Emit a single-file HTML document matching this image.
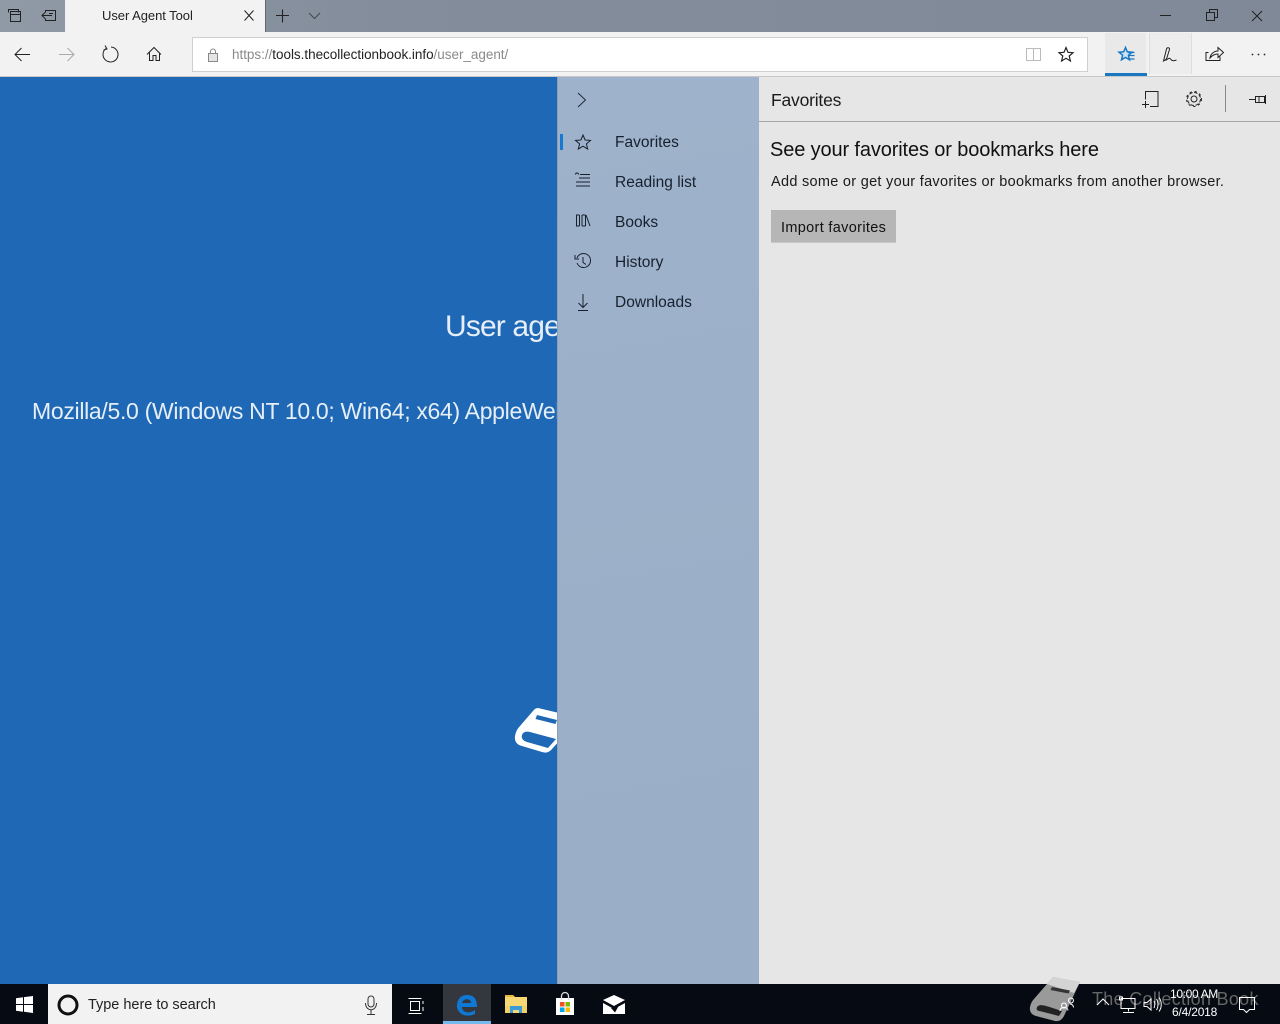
<!DOCTYPE html>
<html><head><meta charset="utf-8"><title>User Agent Tool</title>
<style>
html,body{margin:0;padding:0;width:1280px;height:1024px;overflow:hidden;background:#1f68b5}
body{position:relative;font-family:"Liberation Sans",sans-serif;color:#1a1a1a}
.a{position:absolute}
.t{position:absolute;white-space:nowrap;line-height:1}
.n{font-size:15.5px;color:#17212e;letter-spacing:.02px;left:615px}
svg{position:absolute;overflow:visible;fill:none;stroke:#222;stroke-width:1}
</style></head><body>
<!-- Title bar -->
<div class="a" style="left:0;top:0;width:1280px;height:32px;background:linear-gradient(90deg,#8f9aa6,#838d9b 30%,#7f8997)"></div>
<div class="a" style="left:65px;top:0;width:200px;height:32px;background:#f2f2f2"></div>
<div class="a" style="left:265px;top:0;width:1px;height:32px;background:#5f6872"></div>
<div class="t" style="left:102px;top:9px;font-size:13px;color:#222;letter-spacing:-.05px">User Agent Tool</div>
<svg style="left:0;top:0" width="330" height="32">
<path d="M8.5 12.5v-3h10v3M10.5 11.5h10v10h-10zM10.5 14.5h10"/>
<path d="M45.5 12.5v-2h10v10h-10v-2M42 15.5h10M45 12.500l-3 3 3 3M49 13.500h4"/>
<path d="M244.500 10.500l9 10M253.500 10.500l-9 10"/>
<path d="M282.500 9.500v13M276 15.500h13" stroke-width="1.100"/>
<path d="M309 13l5.500 5.500 5.500-5.500" stroke="#3f4650"/>
</svg>
<svg style="left:1150px;top:0" width="130" height="32">
<path d="M10 15.500h11"/>
<path d="M56.500 12.500h8v8h-8zM59.500 12.500v-3h8v8h-3"/>
<path d="M102 11l10 10M112 11l-10 10"/>
</svg>
<!-- Toolbar -->
<div class="a" style="left:0;top:32px;width:1280px;height:44px;background:#f2f2f2"></div>
<div class="a" style="left:192px;top:37px;width:894px;height:33px;background:#fff;border:1px solid #cfcfcf"></div>
<div class="t" style="left:232px;top:48px;font-size:13.5px;color:#8a8a8a;letter-spacing:-.03px">https://<span style="color:#222">tools.thecollectionbook.info</span>/user_agent/</div>
<svg style="left:0;top:32px" width="220" height="44">
<path d="M15 22.500h15M21.500 16l-6.500 6.500 6.500 6.500"/>
<path d="M59 22.500h15M67.500 16l6.500 6.500-6.500 6.500" stroke="#aaa"/>
<path d="M106 16.500a7.500 7.500 0 1 0 5-1.500M105 13.500l2 3.500-3.500 1"/>
<path d="M147 22.500l7-7 7 7M149.500 20.500v8h3.500v-5h3v5h3.500v-8"/>
</svg>
<svg style="left:205px;top:46px" width="16" height="18">
<rect x="3.500" y="7.500" width="9" height="8" fill="#e4e4e4" stroke="#888"/>
<path d="M5.500 7.500v-2a2.500 2.500 0 0 1 5 0v2" stroke="#888"/>
</svg>
<svg style="left:1020px;top:44px" width="70" height="22">
<path d="M6.500 4.500h6.500l.5 1 .5-1h6.500v12h-14zM13.500 5.500v11" stroke="#bbb"/>
<path d="M46 3.500l2 4.800 5 .4-3.800 3.300 1.200 5-4.400-2.700-4.400 2.700 1.200-5-3.800-3.300 5-.4z" stroke="#222" stroke-width="1.200"/>
</svg>
<!-- right toolbar -->
<div class="a" style="left:1105px;top:33px;width:41px;height:40px;background:#e9e9e9"></div>
<div class="a" style="left:1105px;top:73px;width:42px;height:3px;background:#1a78c2"></div>
<div class="a" style="left:1149px;top:33px;width:41px;height:41px;background:#ededed;border-right:1px solid #dedede;border-left:1px solid #dedede"></div>
<svg style="left:1105px;top:33px" width="175" height="42">
<path d="M20.500 14.500l1.800 4.300 4.700.4-3.600 3 1.100 4.600-4-2.400-4 2.400 1.100-4.600-3.600-3 4.700-.4z" stroke="#1a78c2" stroke-width="1.500" fill="#cfe3f3"/>
<path d="M23 19.500h6.500M24 22.500h5.500M24 26h5.500" stroke="#1a78c2" stroke-width="1.200"/>
<path d="M58.500 28l3-12c.5-2 3.500-1.500 3 .5l-3 9.500-3 2zM60.500 27.500c3-2 4-3.500 5.500-1 1 1.500 3 1.500 5.500.5"/>
<path d="M103.500 19.500h-2.500v8h14v-4M105 25c.5-4 4-7 8-7v-3.500l5.500 5-5.500 5v-3.500c-3 0-5.500 1-8 4z"/>
<circle cx="147.500" cy="21.500" r=".9" fill="#222" stroke="none"/><circle cx="153.500" cy="21.500" r=".9" fill="#222" stroke="none"/><circle cx="159.500" cy="21.500" r=".9" fill="#222" stroke="none"/>
</svg>
<div class="a" style="left:0;top:76px;width:1280px;height:1px;background:#c8c8c8"></div>
<!-- Page -->
<div class="a" style="left:0;top:77px;width:558px;height:907px;background:#1f68b5;overflow:hidden">
<div class="t" style="left:445px;top:235px;font-size:30px;color:#e6eef7;letter-spacing:-.85px">User agent</div>
<div class="t" style="left:32px;top:323px;font-size:23px;color:#e6eef7;letter-spacing:-.31px">Mozilla/5.0 (Windows NT 10.0; Win64; x64) AppleWebKit/537.36</div>
<svg style="left:0;top:0" width="620" height="700">
<path d="M538 631L580 641 552 672q-4 5-10 3L522 669q-8-2-7-10q1-6 5-10L533 634q2-3 5-3z" fill="#fff" stroke="none"/>
<path d="M522 658c1-3 4-4 8-3L556 662 548 671 527 665c-4-1-6-4-5-7z" fill="#1f68b5" stroke="none"/>
<path d="M537 638l20 5-1.500 4-20-5z" fill="#1f68b5" stroke="none"/>
</svg>
</div>
<div class="a" style="left:557px;top:77px;width:1px;height:907px;background:#8aa0bb"></div>
<!-- Side nav -->
<div class="a" style="left:558px;top:77px;width:201px;height:907px;background:linear-gradient(170deg,#9fb2cb,#9bafc8 60%,#9aaec8)"></div>
<div class="a" style="left:560px;top:134px;width:3px;height:16px;background:#1a78d0"></div>
<div class="t n" style="top:135px">Favorites</div>
<div class="t n" style="top:175px">Reading list</div>
<div class="t n" style="top:215px">Books</div>
<div class="t n" style="top:255px">History</div>
<div class="t n" style="top:295px">Downloads</div>
<svg style="left:558px;top:77px" width="60" height="240">
<path d="M20 16l7.500 7-7.500 7" stroke="#1d2a3a"/>
<path d="M25 58l2.100 5 5.400.4-4.100 3.500 1.300 5.200-4.700-2.900-4.700 2.900 1.300-5.200-4.100-3.500 5.400-.4z" stroke="#17212e"/>
<path d="M21 101h11M18 105h14M18 109h14M22 97.500h10M17.500 97.500a1.500 1.500 0 1 1 3 0" stroke="#17212e"/>
<path d="M18.500 138v11M21.500 138v11M24 138v11M27.500 138v11M18 138h3.500M18 149h3.500M24 138h3.500M24 149h3.500M28 138l4 11" stroke="#17212e"/>
<path d="M19 181a7 7 0 1 1 0 5M17 178v4h4M25 180v5.500l3 2" stroke="#17212e"/>
<path d="M25 217v13M20.500 226l4.500 4.500 4.500-4.500M20 233.500h10" stroke="#17212e"/>
</svg>
<!-- Favorites pane -->
<div class="a" style="left:759px;top:77px;width:521px;height:907px;background:#e6e6e6"></div>
<div class="a" style="left:759px;top:121px;width:521px;height:1px;background:#a8a8a8"></div>
<div class="t" style="left:771px;top:92px;font-size:17.5px;color:#1a1a1a;letter-spacing:-.2px">Favorites</div>
<div class="t" style="left:770px;top:140px;font-size:20px;color:#111;letter-spacing:-.13px">See your favorites or bookmarks here</div>
<div class="t" style="left:771px;top:175px;font-size:14.5px;color:#1a1a1a;letter-spacing:.29px">Add some or get your favorites or bookmarks from another browser.</div>
<div class="a" style="left:771px;top:210px;width:125px;height:32px;background:#b6b6b6;border-bottom:1px solid #c8c8c8"></div>
<div class="t" style="left:781px;top:221px;font-size:14.5px;color:#111;letter-spacing:.33px">Import favorites</div>
<svg style="left:1130px;top:82px" width="150" height="34">
<path d="M15.500 17.500v-8h12.500v15h-8M12 22.500h7M15.500 19v7"/>
<g transform="translate(64,17)"><circle r="3" /><circle r="6.500" stroke-dasharray="3.500 1.600"/><circle r="7.500" stroke-dasharray="2.200 2.900"/></g>
<path d="M95.500 3v27" stroke="#8a8a8a"/>
<path d="M119 17.500h6M125.500 14.500h9v6h-9zM129 14.500v6M135.500 13v9"/>
</svg>
<!-- Taskbar -->
<div class="a" style="left:0;top:984px;width:1280px;height:40px;background:#060a12"></div>
<svg style="left:16px;top:996px" width="18" height="17"><path d="M0 2.300l7-1v6.700H0zM8 1.100L17 0v8H8zM0 9h7v6.700l-7-1zM8 9h9v8l-9-1.200z" fill="#fff" stroke="none"/></svg>
<div class="a" style="left:48px;top:984px;width:344px;height:40px;background:#f2f2f2"></div>
<svg style="left:48px;top:984px" width="344" height="40">
<circle cx="20" cy="21" r="9" stroke="#111" stroke-width="3"/>
<rect x="320" y="12" width="6" height="11" rx="3" stroke="#333"/><path d="M317.500 19c0 9 11 9 11 0M323 26v4M319 30.500h8" stroke="#333"/>
</svg>
<div class="t" style="left:88px;top:998px;font-size:14.5px;color:#222;letter-spacing:-.02px">Type here to search</div>
<svg style="left:392px;top:984px" width="260" height="40">
<path d="M16.500 14.500h13M16.500 29.500h13M18.500 17.500h9v9h-9zM31 17v3M31 23v4" stroke="#fff"/>
</svg>
<div class="a" style="left:443px;top:984px;width:48px;height:40px;background:#34373d"></div>
<div class="a" style="left:443px;top:1021px;width:48px;height:3px;background:#76b9ed"></div>
<svg style="left:443px;top:984px" width="48" height="40">
<path d="M14 22c0-7 4-11 10-11 7 0 10 4 10 12H19c0 6 8 7 13 3v4c-7 3-14 2-17-4-1-1-1-3-1-4zM19 19h9c0-5-8-5-9 0z" fill="#0f78d4" stroke="none"/>
</svg>
<svg style="left:504px;top:994px" width="24" height="21">
<path d="M1 1h8l2 2h12v16H1z" fill="#f6d774" stroke="none"/>
<path d="M1 1h8l2 2H1z" fill="#e8b93e" stroke="none"/>
<path d="M6 12h12v7h-3v-3H9v3H6z" fill="#3b9bd8" stroke="none"/>
<path d="M1 12h5v7H1zM18 12h5v7h-5z" fill="#f0d069" stroke="none"/>
</svg>
<svg style="left:555px;top:991px" width="20" height="25">
<path d="M1 7h18v17H1z" fill="#fff" stroke="none"/>
<path d="M6.500 9V5a3.500 3.500 0 0 1 7 0v4" stroke="#ddd" stroke-width="1.300"/>
<rect x="5" y="11" width="4.500" height="4.500" fill="#f25022" stroke="none"/>
<rect x="10.500" y="11" width="4.500" height="4.500" fill="#7fba00" stroke="none"/>
<rect x="5" y="16.500" width="4.500" height="4.500" fill="#00a4ef" stroke="none"/>
<rect x="10.500" y="16.500" width="4.500" height="4.500" fill="#ffb900" stroke="none"/>
</svg>
<svg style="left:602px;top:995px" width="24" height="19">
<path d="M1 5L12 0l11 5-11 6zM1 8l11 6 11-6v11H1z" fill="#fff" stroke="none"/>
<path d="M9 13l9-4.500-5 9z" fill="#060a12" stroke="none"/>
</svg>
<!-- Watermark -->
<svg style="left:1028px;top:976px" width="56" height="48">
<path d="M25 1L52 6 36 40q-3 6-9 5L8 40q-7-2-6-9q1-5 4-8z" fill="#9a9a9a" stroke="none"/>
<path d="M25 1L52 6 46 17 19 8z" fill="#d4d4d4" stroke="none"/>
<path d="M10 30c3-2 6-1 24 5l-3 5c-8-2-15-4-20-5-3-1-3-3-1-5z" fill="#222" stroke="none"/>
<path d="M24 11l18 3.500-1.500 3-18-3.500z" fill="#333" stroke="none"/>
<path d="M36 27a2.500 2.500 0 1 1-.1 0zM32 35c0-3 2-3.500 4-3.500s4 1 4 3M43 22a2.500 2.500 0 1 1-.1 0zM42 28c2 0 3.500 1.500 3.500 3.500" stroke="#fff"/>
</svg>
<div class="t" style="left:1092px;top:990px;font-size:18px;color:#666;letter-spacing:.3px">The Collection Book</div>
<!-- Tray -->
<svg style="left:1090px;top:984px" width="190" height="40">
<path d="M7 21l6-6 6 6" stroke="#fff"/>
<path d="M31 14.500h14v10H31zM38.500 24.500v3M33 28.500h11" stroke="#fff"/>
<rect x="29.500" y="13" width="3" height="3" stroke="#fff"/>
<path d="M54 18.500h3l4-3.500v11l-4-3.500h-3zM64 17c1 2 1 5 0 7M66.500 15c2 3 2 8 0 11M69 13.500c3 4 3 10 0 14" stroke="#fff"/>
<path d="M149.500 13.500h15v12h-5l-3 3-3-3h-4z" stroke="#fff"/>
</svg>
<div class="t" style="left:1170px;top:988px;font-size:12px;color:#fff;letter-spacing:-.35px">10:00 AM</div>
<div class="t" style="left:1172px;top:1006px;font-size:12px;color:#fff;letter-spacing:-.2px">6/4/2018</div>
</body></html>
